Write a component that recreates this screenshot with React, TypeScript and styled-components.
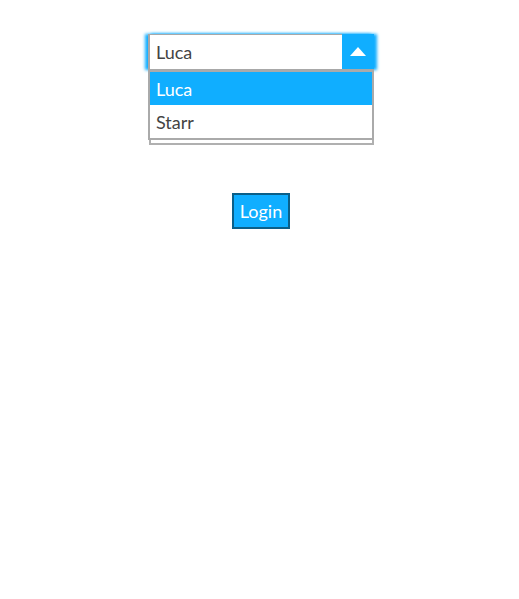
import React from "react";
import styled, { createGlobalStyle } from "styled-components";

const GlobalStyle = createGlobalStyle`
  html, body {
    margin: 0;
    padding: 0;
    background: #ffffff;
    font-family: Lato, "Liberation Sans", sans-serif;
  }
`;

const blue = "#10aeff";

const Page = styled.div`
  display: flex;
  flex-direction: column;
  align-items: center;
  padding: 34px 0 0 3px;
`;

const SelectWrap = styled.div`
  position: relative;
  width: 226px;
`;

const Control = styled.div`
  display: flex;
  align-items: stretch;
  height: 36px;
  box-sizing: border-box;
  border: 1px solid #a8a8a8;
  border-left-width: 2px;
  border-right: none;
  background: #fff;
  box-shadow: -3px 0 3px 0 ${blue}, 3px 0 3px 0 ${blue};
`;

const Value = styled.div`
  flex: 1;
  display: flex;
  align-items: center;
  padding-left: 6px;
  font-size: 18px;
  color: #444;
`;

const ArrowButton = styled.div`
  width: 32px;
  margin-top: -1px;
  display: flex;
  align-items: center;
  justify-content: center;
  background: ${blue};
`;

const ListFrame = styled.div`
  height: 75px;
  margin: 0 0 0 1px;
  box-sizing: border-box;
  border: 2px solid #b0b0b0;
  border-top: none;
`;

const Menu = styled.ul`
  position: absolute;
  top: 36px;
  left: 0;
  right: 0;
  margin: 0;
  padding: 0;
  list-style: none;
  background: #fff;
  border: 2px solid #aaaaaa;
`;

const Option = styled.li<{ $active?: boolean }>`
  height: 33px;
  display: flex;
  align-items: center;
  padding-left: 6px;
  font-size: 18px;
  color: ${(p) => (p.$active ? "#fff" : "#444")};
  background: ${(p) => (p.$active ? blue : "#fff")};
`;

const LoginButton = styled.button`
  margin-top: 48px;
  height: 36px;
  padding: 0 6px;
  font-family: Lato, "Liberation Sans", sans-serif;
  font-size: 18px;
  color: #fff;
  background: ${blue};
  border: 2px solid #0b5f88;
  border-radius: 0;
`;

export default function App() {
  return (
    <>
      <GlobalStyle />
      <Page>
        <SelectWrap>
          <Control>
            <Value>Luca</Value>
            <ArrowButton>
              <svg width="16" height="9" viewBox="0 0 16 9">
                <polygon points="8,0 16,9 0,9" fill="#fff" />
              </svg>
            </ArrowButton>
          </Control>
          <ListFrame />
          <Menu>
            <Option $active>Luca</Option>
            <Option>Starr</Option>
          </Menu>
        </SelectWrap>
        <LoginButton>Login</LoginButton>
      </Page>
    </>
  );
}
